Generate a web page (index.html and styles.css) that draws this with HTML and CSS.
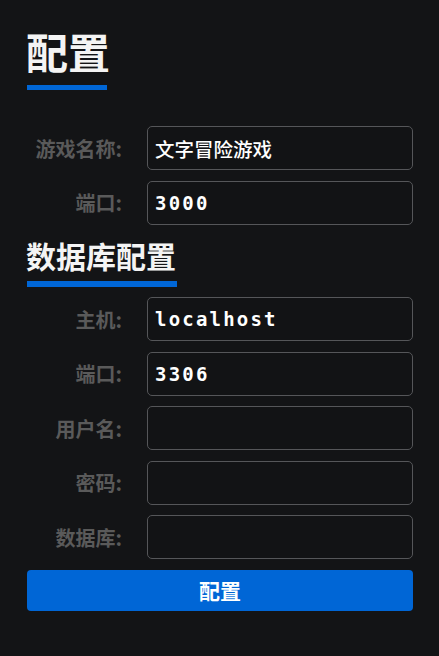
FILE: index.html
```html
<!DOCTYPE html>
<html lang="zh">
<head>
<meta charset="utf-8">
<title>配置</title>
<link rel="stylesheet" href="styles.css">
</head>
<body>
<div class="page">
  <h1 class="title">配置</h1>
  <div class="bar bar-title"></div>
  <form class="form">
    <div class="row">
      <label class="label">游戏名称:</label>
      <input class="field" type="text" value="文字冒险游戏">
    </div>
    <div class="row">
      <label class="label">端口:</label>
      <input class="field mono" type="text" value="3000">
    </div>
    <h2 class="section">数据库配置</h2>
    <div class="bar bar-section"></div>
    <div class="row">
      <label class="label">主机:</label>
      <input class="field mono" type="text" value="localhost">
    </div>
    <div class="row">
      <label class="label">端口:</label>
      <input class="field mono" type="text" value="3306">
    </div>
    <div class="row">
      <label class="label">用户名:</label>
      <input class="field mono" type="text" value="">
    </div>
    <div class="row">
      <label class="label">密码:</label>
      <input class="field mono" type="password" value="">
    </div>
    <div class="row">
      <label class="label">数据库:</label>
      <input class="field mono" type="text" value="">
    </div>
    <button class="btn" type="button">配置</button>
  </form>
</div>
</body>
</html>
```
FILE: styles.css
```css
html, body {
  margin: 0;
  padding: 0;
  background: #131416;
}
body {
  font-family: "Noto Sans CJK SC", "Noto Sans", sans-serif;
  color: #ffffff;
}
.page {
  padding: 25px 26px 0 27px;
}
.title {
  margin: 0 0 0 -1px;
  font-size: 42px;
  line-height: 52px;
  font-weight: 700;
  color: #f4f4f4;
}
.bar {
  height: 5px;
  background: #0066d6;
}
.bar-title {
  width: 80px;
  margin-top: 8px;
}
.form {
  display: flex;
  flex-direction: column;
  gap: 10.5px;
  margin-top: 36px;
}
.row {
  display: flex;
  align-items: center;
}
.label {
  width: 95px;
  flex: none;
  text-align: right;
  font-size: 20px;
  font-weight: 700;
  color: #5a5a5a;
  padding-right: 25px;
  white-space: nowrap;
}
.field {
  flex: 1;
  box-sizing: border-box;
  height: 44px;
  border: 1px solid #555659;
  border-radius: 5px;
  background: #121315;
  color: #ffffff;
  padding: 0 7px;
  font-family: "Noto Sans CJK SC", sans-serif;
  font-size: 19.5px;
  font-weight: 500;
  outline: none;
}
.field.mono {
  font-family: "DejaVu Sans Mono", "Noto Sans CJK SC", monospace;
  font-size: 19px;
  font-weight: 700;
  letter-spacing: 2.2px;
}
.section {
  margin: 2px 0 0 -1px;
  font-size: 30px;
  line-height: 36px;
  font-weight: 700;
  color: #f4f4f4;
}
.bar-section {
  width: 150px;
  height: 6px;
  margin-top: -3px;
}
.btn {
  height: 41px;
  border: none;
  border-radius: 4px;
  background: #0066d6;
  color: #ffffff;
  font-family: "Noto Sans CJK SC", sans-serif;
  font-size: 21px;
  font-weight: 700;
  cursor: pointer;
}
```
